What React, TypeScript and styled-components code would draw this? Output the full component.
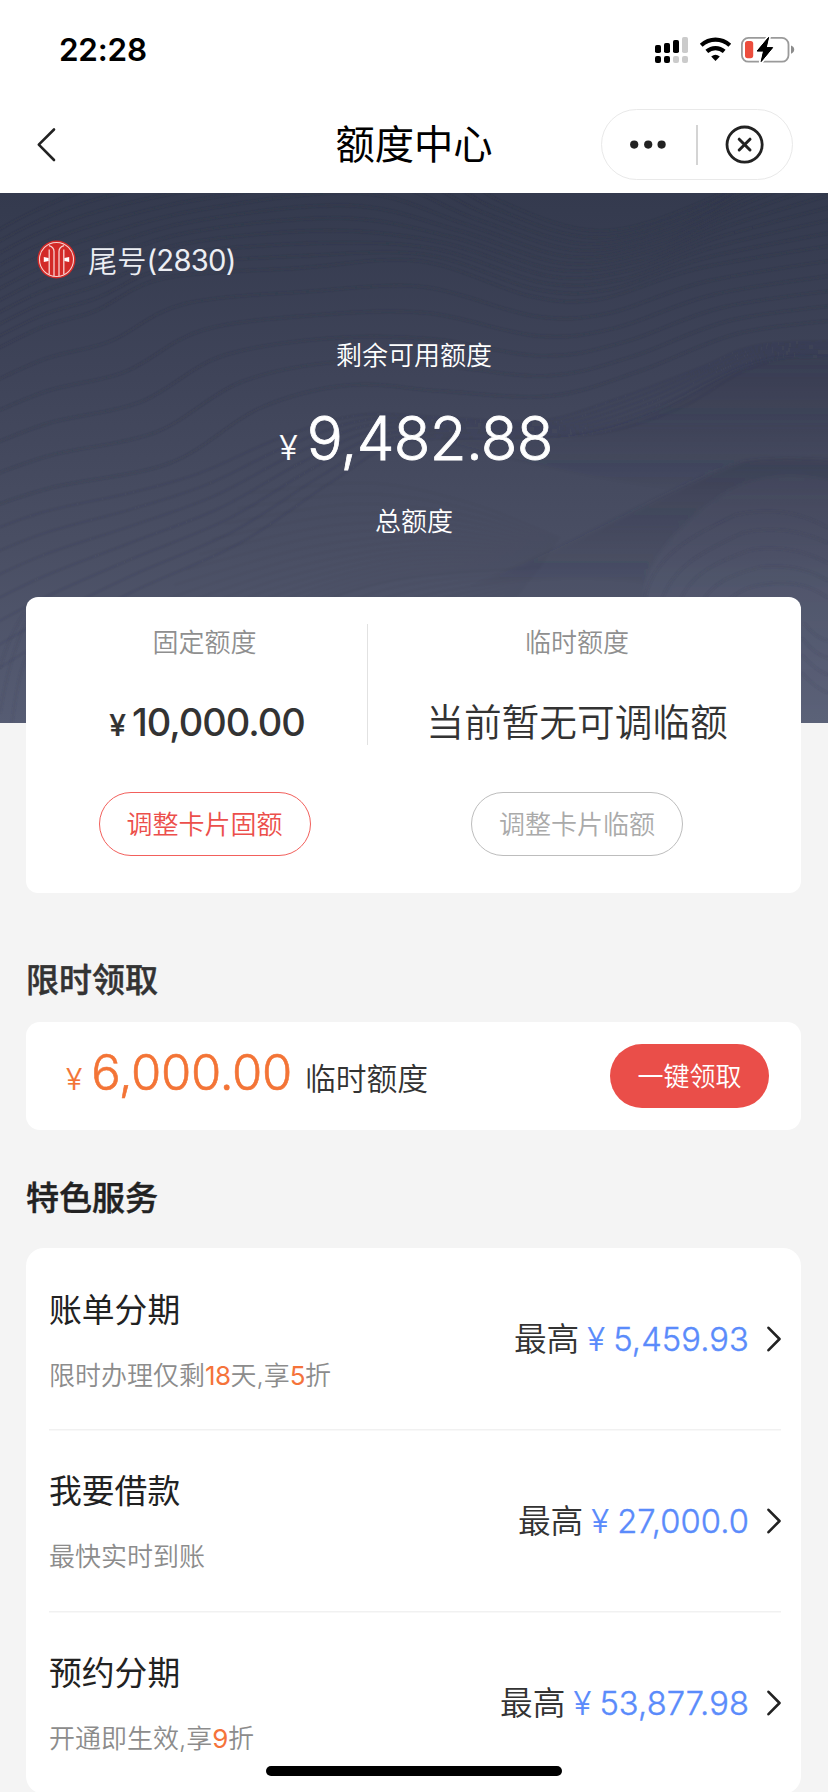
import React from "react";
import styled, { createGlobalStyle } from "styled-components";

const GlobalStyle = createGlobalStyle`
  * { box-sizing: border-box; }
  html, body { margin: 0; padding: 0; }
  body {
    background: #f4f4f4;
    font-family: Inter, "Noto Sans CJK SC", sans-serif;
    color: #333;
  }
  button { font: inherit; background: none; border: 0; padding: 0; margin: 0; }
  svg { display: block; flex: none; }
`;

const Screen = styled.div`
  position: relative;
  width: 828px;
  height: 1792px;
  overflow: hidden;
  background: #f4f4f4;
`;

const StatusBar = styled.header`
  display: flex;
  align-items: center;
  justify-content: space-between;
  height: 96px;
  padding: 4px 32px 0 59px;
  background: #fff;
`;

const Clock = styled.span`
  font-size: 31.4px;
  line-height: 40px;
  font-weight: 600;
  letter-spacing: -0.2px;
  color: #000;
`;

const NavBar = styled.nav`
  display: grid;
  grid-template-columns: 227px 1fr 227px;
  align-items: center;
  height: 97px;
  background: #fff;
`;

const BackButton = styled.button`
  display: flex;
  padding-left: 34px;
`;

const PageTitle = styled.h1`
  margin: 0;
  padding-top: 1px;
  text-align: center;
  font-size: 39.3px;
  line-height: 56px;
  font-weight: 400;
  color: #000;
`;

const Capsule = styled.div`
  display: flex;
  align-items: center;
  width: 192px;
  height: 71px;
  border: 1px solid #e9e9e9;
  border-radius: 36px;
`;

const CapsuleAction = styled.button`
  display: flex;
  flex: 1;
  align-items: center;
  justify-content: center;
`;

const CapsuleRule = styled.span`
  width: 2px;
  height: 40px;
  background: #d4d4d4;
`;

const Hero = styled.section`
  position: relative;
  display: flex;
  flex-direction: column;
  height: 530px;
  background: linear-gradient(#343a4e 0%, #3f4459 35%, #4a4f64 68%, #565c73 100%);
  color: #fff;
`;

const Contours = styled.svg`
  position: absolute;
  inset: 0;
`;

const HeroBody = styled.div`
  position: relative;
  display: flex;
  flex-direction: column;
  align-items: center;
  padding-top: 46px;
`;

const Account = styled.div`
  display: flex;
  align-items: center;
  align-self: flex-start;
  height: 40px;
  padding-left: 37px;
  gap: 12px;
  font-size: 29.2px;
  font-weight: 350;
  color: #eceef3;
`;

const AccountDigits = styled.span`
  position: relative;
  top: -1px;
  font-weight: 400;
  letter-spacing: -0.7px;
`;

const HeroLabel = styled.p<{ $top: number }>`
  margin: ${(p) => p.$top}px 0 0;
  font-size: 26px;
  line-height: 40px;
  font-weight: 350;
`;

const HeroAmount = styled.p`
  display: flex;
  align-items: baseline;
  margin: 25px 0 0 4px;
  height: 74px;
  line-height: 74px;
  font-size: 60px;
  font-weight: 300;
  -webkit-text-stroke: 0.8px currentColor;
`;

const Yen = styled.span<{ $size: number; $gap: number }>`
  font-size: ${(p) => p.$size}px;
  margin-right: ${(p) => p.$gap}px;
  -webkit-text-stroke-width: 0.2px;
`;

const Digits = styled.span<{ $spacing: number }>`
  letter-spacing: ${(p) => p.$spacing}px;
`;

const Card = styled.section<{ $radius: number }>`
  position: relative;
  width: 775px;
  margin: 0 0 0 26px;
  border-radius: ${(p) => p.$radius}px;
  background: #fff;
`;

const LimitCard = styled(Card)`
  display: grid;
  grid-template-columns: 341px 1px 1fr;
  height: 296px;
  margin-top: -126px;
`;

const LimitRule = styled.span`
  height: 121px;
  margin-top: 27px;
  background: #e2e2e2;
`;

const LimitColumn = styled.div<{ $left?: number; $right?: number }>`
  display: flex;
  flex-direction: column;
  align-items: center;
  padding: 26px ${(p) => p.$right ?? 0}px 0 ${(p) => p.$left ?? 0}px;
`;

const LimitLabel = styled.span`
  font-size: 26px;
  line-height: 40px;
  font-weight: 350;
  color: #8f8f8f;
`;

const LimitValue = styled.div<{ $medium?: boolean }>`
  display: flex;
  align-items: baseline;
  justify-content: center;
  height: 56px;
  margin: 31px 0 0 ${(p) => (p.$medium ? 5 : 0)}px;
  line-height: 56px;
  font-size: ${(p) => (p.$medium ? 38 : 37.7)}px;
  font-weight: ${(p) => (p.$medium ? 550 : 350)};
  white-space: nowrap;
  color: #333;
`;

const OutlineButton = styled.button<{ $tone: "red" | "grey" }>`
  width: 212px;
  height: 64px;
  margin-top: 42px;
  border: 1px solid ${(p) => (p.$tone === "red" ? "#f2605c" : "#bdbdbd")};
  border-radius: 32px;
  font-size: 26px;
  font-weight: 350;
  line-height: 61px;
  color: ${(p) => (p.$tone === "red" ? "#ec4f4b" : "#aaa")};
`;

const SectionTitle = styled.h2<{ $top: number; $bottom: number; $color: string }>`
  margin: ${(p) => p.$top}px 0 ${(p) => p.$bottom}px 26px;
  font-size: 33px;
  line-height: 48px;
  font-weight: 500;
  -webkit-text-stroke: 0.45px currentColor;
  color: ${(p) => p.$color};
`;

const OfferCard = styled(Card)`
  display: flex;
  align-items: center;
  justify-content: space-between;
  height: 108px;
  padding: 0 32px 0 40px;
`;

const OfferText = styled.div`
  display: flex;
  align-items: baseline;
  line-height: 60px;
`;

const OfferAmount = styled.span`
  display: flex;
  align-items: baseline;
  font-size: 49px;
  font-weight: 300;
  -webkit-text-stroke: 0.6px currentColor;
  color: #f37436;
`;

const OfferName = styled.span`
  margin-left: 13px;
  font-size: 30.8px;
  font-weight: 350;
`;

const ClaimButton = styled.button`
  width: 159px;
  height: 64px;
  border-radius: 32px;
  background: #ea4e49;
  color: #fff;
  font-size: 26px;
  font-weight: 350;
  line-height: 63px;
`;

const ServiceCard = styled(Card)`
  height: 546px;
  padding: 0 20px 0 23px;
`;

const ServiceRow = styled.div`
  display: flex;
  align-items: center;
  justify-content: space-between;
  height: 182px;
  &:first-child {
    height: 181px;
  }
  & + & {
    box-shadow: inset 0 1.5px 0 #f1f1f1;
  }
`;

const ServiceText = styled.div`
  display: flex;
  flex-direction: column;
  gap: 22px;
  margin-top: 4px;
`;

const ServiceName = styled.span`
  font-size: 32.8px;
  line-height: 48px;
  color: #222;
`;

const ServiceHint = styled.span`
  font-size: 26px;
  line-height: 40px;
  font-weight: 350;
  color: #8c8c8c;
`;

const Accent = styled.em`
  font-style: normal;
  font-weight: 400;
  letter-spacing: -0.6px;
  color: #f5733a;
`;

const ServiceLimit = styled.div`
  display: flex;
  align-items: center;
  margin-top: 1px;
  line-height: 48px;
  font-size: 32.7px;
  font-weight: 350;
`;

const LimitAmount = styled.span`
  margin: 0 17px 0 8px;
  font-weight: 300;
  letter-spacing: 0.1px;
  -webkit-text-stroke: 0.4px currentColor;
  color: #5a8bfb;
`;

const HomeIndicator = styled.div`
  position: absolute;
  left: 266px;
  top: 1766px;
  width: 296px;
  height: 10px;
  border-radius: 5px;
  background: #000;
`;

type Point = [number, number];

/* Catmull-Rom spline through the points, as a cubic path. */
function spline(points: Point[]): string {
  let d = `M${points[0][0]} ${points[0][1]}`;
  for (let i = 0; i < points.length - 1; i++) {
    const p0 = points[Math.max(i - 1, 0)];
    const p1 = points[i];
    const p2 = points[i + 1];
    const p3 = points[Math.min(i + 2, points.length - 1)];
    d += ` C${p1[0] + (p2[0] - p0[0]) / 6} ${p1[1] + (p2[1] - p0[1]) / 6} ${p2[0] - (p3[0] - p1[0]) / 6} ${p2[1] - (p3[1] - p1[1]) / 6} ${p2[0]} ${p2[1]}`;
  }
  return d;
}

function between(a: Point[], b: Point[], count: number): string[] {
  return Array.from({ length: count }, (_, i) => {
    const t = count === 1 ? 0 : i / (count - 1);
    return spline(a.map(([x, y], k) => [x + (b[k][0] - x) * t, y + (b[k][1] - y) * t] as Point));
  });
}

const upper: Point[] = [[-40, 60], [30, 20], [110, -10], [230, -30], [400, -50], [500, 8], [600, 38], [700, 10], [770, -30], [860, -90]];
const middle: Point[] = [[-40, 175], [40, 135], [95, 118], [165, 85], [300, 75], [420, 68], [530, 103], [600, 106], [700, 75], [860, 48]];
const lower: Point[] = [[-40, 325], [50, 295], [170, 270], [260, 215], [350, 192], [440, 198], [550, 203], [640, 178], [740, 140], [860, 125]];
const lowStart: Point[] = [[-40, 350], [40, 320], [130, 300], [200, 280], [280, 245], [360, 222], [450, 225], [540, 228], [620, 205], [700, 175], [760, 152], [860, 148]];
const lowEdge: Point[] = [[-40, 500], [40, 450], [130, 400], [240, 350], [330, 290], [400, 250], [500, 245], [600, 240], [680, 215], [740, 180], [790, 165], [860, 165]];
const fanTop: Point[] = [[250, 300], [370, 290], [470, 310], [560, 345]];
const fanBottom: Point[] = [[60, 530], [220, 450], [380, 390], [540, 375]];
const fanFloor: Point[] = [[260, 540], [340, 500], [430, 440], [520, 400]];

function HeroContours() {
  const lines = [...between(upper, middle, 11), ...between(middle, lower, 6).slice(1)];
  return (
    <Contours width="828" height="530" viewBox="0 0 828 530" fill="none">
      <defs>
        <linearGradient id="shade" x1="0" y1="0" x2="0" y2="1">
          <stop offset="0" stopColor="#303448" stopOpacity="0.32" />
          <stop offset="1" stopColor="#303448" stopOpacity="0" />
        </linearGradient>
        <linearGradient id="mound" x1="0" y1="0" x2="0" y2="1">
          <stop offset="0" stopColor="#7c839c" stopOpacity="0.06" />
          <stop offset="1" stopColor="#7c839c" stopOpacity="0.14" />
        </linearGradient>
        <filter id="soft"><feGaussianBlur stdDeviation="0.9" /></filter>
        <filter id="haze" x="-10%" y="-10%" width="120%" height="120%"><feGaussianBlur stdDeviation="2" /></filter>
      </defs>
      <g filter="url(#soft)">
        <g stroke="#292c3f" strokeOpacity="0.24" strokeWidth="1.9">
          {lines.map((d) => <path key={d} d={d} />)}
        </g>
        <g stroke="#292c3f" strokeOpacity="0.1" strokeWidth="2">
          {between(lowStart, lowEdge, 7).map((d) => <path key={d} d={d} />)}
        </g>
        <g stroke="#292c3f" strokeOpacity="0.035" strokeWidth="2">
          {between(fanTop, fanBottom, 16).map((d) => <path key={d} d={d} />)}
          {between(fanBottom, fanFloor, 9).map((d) => <path key={d} d={d} />)}
        </g>
      </g>
      <g filter="url(#haze)">
        <path d="M440 246C560 252 600 240 640 225C700 200 730 172 780 165Q810 163 840 166V300H690Q560 280 440 246Z" fill="url(#shade)" />
        <path d="M460 396C560 362 680 288 745 268Q790 263 840 268V400H690Q600 372 460 396Z" fill="url(#shade)" />
        <path d="M648 420C636 385 660 350 710 310Q765 268 840 290V560H648Z" fill="url(#mound)" />
      </g>
      <g filter="url(#soft)">
        <g stroke="#363a4e" strokeOpacity="0.2" strokeWidth="1.8">
          <path d="M644 412C650 360 700 340 735 322Q785 310 828 335" />
          <path d="M660 412C672 370 710 356 742 340Q785 330 828 350" />
          <path d="M678 412C690 380 715 370 750 357Q790 350 828 370" />
          <path d="M700 412C712 390 730 382 760 374Q800 370 828 388" />
          <path d="M724 412C738 396 752 392 775 390Q805 388 828 405" />
          <path d="M804 430Q815 445 828 448M802 445Q815 462 828 465M802 462Q815 477 828 482M802 480Q815 495 828 500" />
          <path d="M0 520Q10 460 28 425M0 475Q8 445 24 420M12 530Q18 480 28 460" />
        </g>
      </g>
    </Contours>
  );
}

function BankLogo() {
  return (
    <svg width="39" height="39" viewBox="0 0 39 39">
      <circle cx="19.5" cy="19.5" r="19" fill="#d32a28" />
      <g fill="none" stroke="#f7d2d0" strokeWidth="1.3">
        <circle cx="19.5" cy="19.5" r="17" strokeWidth="1.1" />
        <path d="M12 5.6Q17 7 17 11.5V36M27 5.6Q22 7 22 11.5V36" />
        <path d="M12.2 34.2V9.5M26.8 34.2V9.5" />
      </g>
      <path d="M6.8 17 11.6 18V21L6.8 22ZM32.2 17 27.4 18V21L32.2 22Z" fill="#fff" />
    </svg>
  );
}

function StatusIcons() {
  return (
    <svg width="142" height="30" viewBox="654 35 142 30">
      <g fill="#000">
        <rect x="655" y="45" width="6" height="8" rx="1.8" />
        <rect x="664" y="43" width="6" height="10" rx="1.8" />
        <rect x="673" y="40" width="6" height="13" rx="1.8" />
        <rect x="655" y="56" width="6" height="7" rx="2" />
        <rect x="664" y="56" width="6" height="7" rx="2" />
      </g>
      <g fill="#cbcbcb">
        <rect x="682" y="37" width="6" height="16" rx="1.8" />
        <rect x="673" y="56" width="6" height="7" rx="2" />
        <rect x="682" y="56" width="6" height="7" rx="2" />
      </g>
      <g fill="none" stroke="#000" strokeWidth="4.2">
        <path d="M701.2 45.2Q707.5 39.6 715.5 39.6Q723.5 39.6 729.8 45.2" />
        <path d="M706.8 51.4Q710.6 48.1 715.5 48.1Q720.4 48.1 724.2 51.4" />
      </g>
      <path d="M711.2 56.6Q715.5 52.8 719.8 56.6L715.5 61Z" fill="#000" />
      <rect x="741.9" y="37.9" width="46.6" height="23.8" rx="6.5" fill="none" stroke="#9a9a9a" strokeWidth="1.8" />
      <path d="M791 45.5Q794.2 46.5 794.2 49.6Q794.2 52.7 791 53.7Z" fill="#8c8c8c" />
      <rect x="745" y="41" width="8.2" height="17.2" rx="2.6" fill="#ec4d3d" />
      <path
        d="M768.8 37 756.8 51.3H763.4L760.9 62 773 47.4H766.4Z"
        fill="#000"
        stroke="#fff"
        strokeWidth="4"
        strokeLinejoin="round"
        paintOrder="stroke"
      />
      <path d="M768.6 37.4 757.2 51H763.6L761.2 61.5 772.6 47.6H766.2Z" stroke="#000" strokeWidth="1" strokeLinejoin="round" />
    </svg>
  );
}

function ChevronRight() {
  return (
    <svg width="15" height="26" viewBox="0 0 15 26" fill="none" stroke="#222" strokeWidth="2.6" strokeLinecap="round" strokeLinejoin="round">
      <path d="M2.5 1.8 13.5 13 2.5 24.2" />
    </svg>
  );
}

interface Service {
  name: string;
  hint: React.ReactNode;
  limit: string;
}

const services: Service[] = [
  { name: "账单分期", hint: <>限时办理仅剩<Accent>18</Accent>天,享<Accent>5</Accent>折</>, limit: "5,459.93" },
  { name: "我要借款", hint: "最快实时到账", limit: "27,000.0" },
  { name: "预约分期", hint: <>开通即生效,享<Accent>9</Accent>折</>, limit: "53,877.98" },
];

export default function App() {
  return (
    <Screen>
      <GlobalStyle />
      <StatusBar>
        <Clock>22:28</Clock>
        <StatusIcons />
      </StatusBar>
      <NavBar>
        <BackButton aria-label="返回">
          <svg width="24" height="36" viewBox="0 0 24 36" fill="none" stroke="#222" strokeWidth="2.6" strokeLinecap="round" strokeLinejoin="round">
            <path d="M20 2.5 4.8 17.7 20 33" />
          </svg>
        </BackButton>
        <PageTitle>额度中心</PageTitle>
        <Capsule>
          <CapsuleAction aria-label="更多">
            <svg width="38" height="10" viewBox="0 0 38 10" fill="#222">
              <circle cx="4.2" cy="4.6" r="4.1" />
              <circle cx="18.2" cy="4.6" r="4.1" />
              <circle cx="31.6" cy="4.6" r="4.1" />
            </svg>
          </CapsuleAction>
          <CapsuleRule />
          <CapsuleAction aria-label="关闭">
            <svg width="40" height="40" viewBox="0 0 40 40" fill="none" stroke="#222">
              <circle cx="19.6" cy="19.6" r="17.6" strokeWidth="2.8" />
              <path d="M14.2 14.2 25 25M25 14.2 14.2 25" strokeWidth="3" strokeLinecap="round" />
            </svg>
          </CapsuleAction>
        </Capsule>
      </NavBar>

      <Hero>
        <HeroContours />
        <HeroBody>
          <Account>
            <BankLogo />
            <span>尾号<AccountDigits>(2830)</AccountDigits></span>
          </Account>
          <HeroLabel $top={57}>剩余可用额度</HeroLabel>
          <HeroAmount>
            <Yen $size={34} $gap={9}>¥</Yen>
            <Digits $spacing={-0.7}>9,482.88</Digits>
          </HeroAmount>
          <HeroLabel $top={27}>总额度</HeroLabel>
        </HeroBody>
      </Hero>

      <LimitCard $radius={12}>
        <LimitColumn $left={16}>
          <LimitLabel>固定额度</LimitLabel>
          <LimitValue $medium>
            <Yen $size={30} $gap={6}>¥</Yen>
            <Digits $spacing={-1}>10,000.00</Digits>
          </LimitValue>
          <OutlineButton $tone="red">调整卡片固额</OutlineButton>
        </LimitColumn>
        <LimitRule />
        <LimitColumn $right={15}>
          <LimitLabel>临时额度</LimitLabel>
          <LimitValue>当前暂无可调临额</LimitValue>
          <OutlineButton $tone="grey">调整卡片临额</OutlineButton>
        </LimitColumn>
      </LimitCard>

      <SectionTitle $top={63} $bottom={18} $color="#333">限时领取</SectionTitle>
      <OfferCard $radius={14}>
        <OfferText>
          <OfferAmount>
            <Yen $size={30} $gap={9}>¥</Yen>
            <Digits $spacing={-0.3}>6,000.00</Digits>
          </OfferAmount>
          <OfferName>临时额度</OfferName>
        </OfferText>
        <ClaimButton>一键领取</ClaimButton>
      </OfferCard>

      <SectionTitle $top={44} $bottom={26} $color="#222">特色服务</SectionTitle>
      <ServiceCard $radius={18}>
        {services.map((s) => (
          <ServiceRow key={s.name}>
            <ServiceText>
              <ServiceName>{s.name}</ServiceName>
              <ServiceHint>{s.hint}</ServiceHint>
            </ServiceText>
            <ServiceLimit>
              最高
              <LimitAmount>
                <Yen $size={33} $gap={8}>¥</Yen>
                {s.limit}
              </LimitAmount>
              <ChevronRight />
            </ServiceLimit>
          </ServiceRow>
        ))}
      </ServiceCard>
      <HomeIndicator />
    </Screen>
  );
}
